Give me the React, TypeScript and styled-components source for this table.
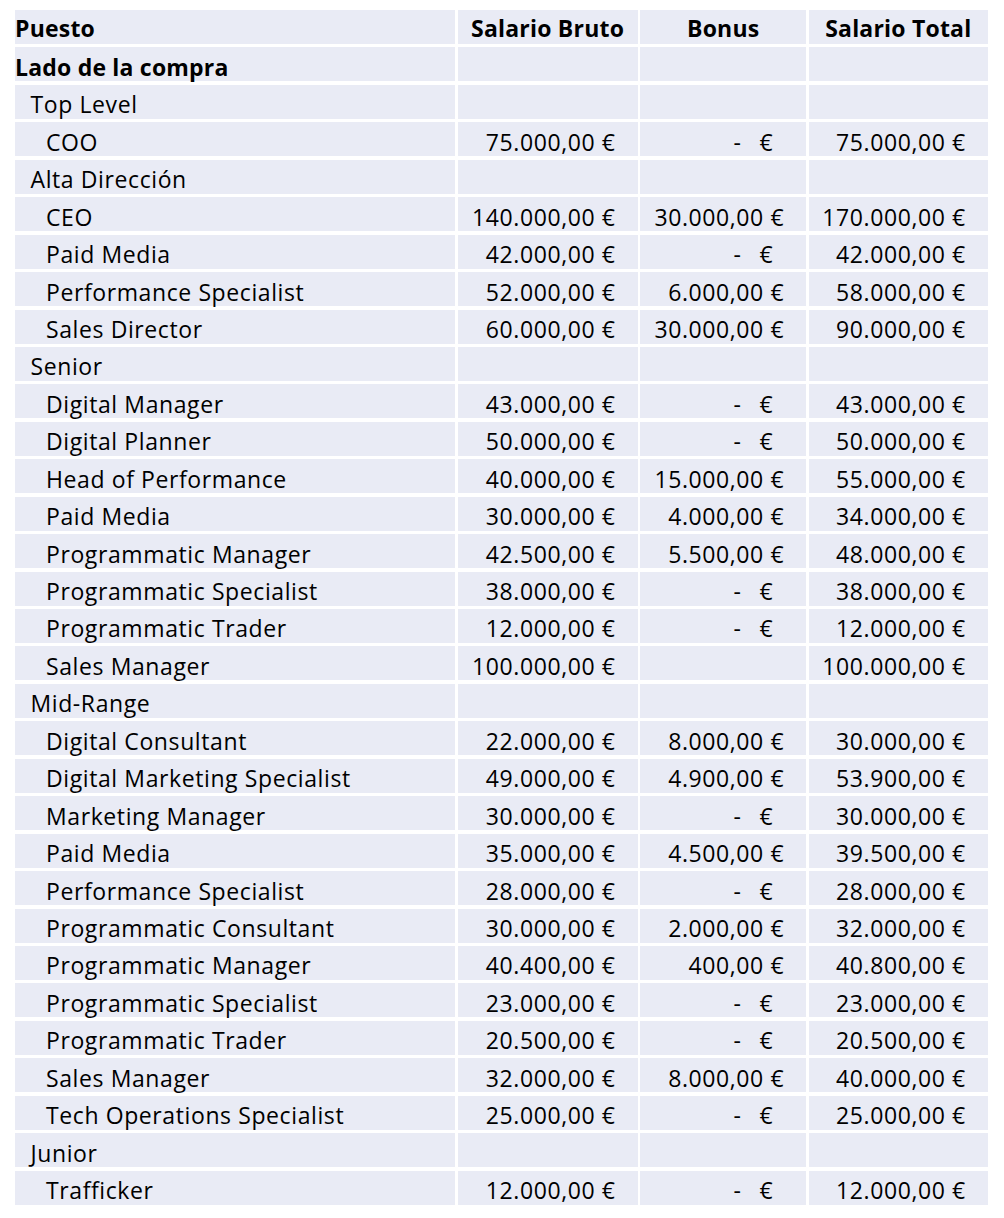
import React from 'react';
import styled, { createGlobalStyle } from 'styled-components';

type Row = {
  label: string;
  level: number;
  bold?: boolean;
  bruto?: number;
  bonus?: number | null;
};

const rows: Row[] = [
  { label: 'Lado de la compra', level: 0, bold: true },
  { label: 'Top Level', level: 1 },
  { label: 'COO', level: 2, bruto: 75000, bonus: 0 },
  { label: 'Alta Dirección', level: 1 },
  { label: 'CEO', level: 2, bruto: 140000, bonus: 30000 },
  { label: 'Paid Media', level: 2, bruto: 42000, bonus: 0 },
  { label: 'Performance Specialist', level: 2, bruto: 52000, bonus: 6000 },
  { label: 'Sales Director', level: 2, bruto: 60000, bonus: 30000 },
  { label: 'Senior', level: 1 },
  { label: 'Digital Manager', level: 2, bruto: 43000, bonus: 0 },
  { label: 'Digital Planner', level: 2, bruto: 50000, bonus: 0 },
  { label: 'Head of Performance', level: 2, bruto: 40000, bonus: 15000 },
  { label: 'Paid Media', level: 2, bruto: 30000, bonus: 4000 },
  { label: 'Programmatic Manager', level: 2, bruto: 42500, bonus: 5500 },
  { label: 'Programmatic Specialist', level: 2, bruto: 38000, bonus: 0 },
  { label: 'Programmatic Trader', level: 2, bruto: 12000, bonus: 0 },
  { label: 'Sales Manager', level: 2, bruto: 100000, bonus: null },
  { label: 'Mid-Range', level: 1 },
  { label: 'Digital Consultant', level: 2, bruto: 22000, bonus: 8000 },
  { label: 'Digital Marketing Specialist', level: 2, bruto: 49000, bonus: 4900 },
  { label: 'Marketing Manager', level: 2, bruto: 30000, bonus: 0 },
  { label: 'Paid Media', level: 2, bruto: 35000, bonus: 4500 },
  { label: 'Performance Specialist', level: 2, bruto: 28000, bonus: 0 },
  { label: 'Programmatic Consultant', level: 2, bruto: 30000, bonus: 2000 },
  { label: 'Programmatic Manager', level: 2, bruto: 40400, bonus: 400 },
  { label: 'Programmatic Specialist', level: 2, bruto: 23000, bonus: 0 },
  { label: 'Programmatic Trader', level: 2, bruto: 20500, bonus: 0 },
  { label: 'Sales Manager', level: 2, bruto: 32000, bonus: 8000 },
  { label: 'Tech Operations Specialist', level: 2, bruto: 25000, bonus: 0 },
  { label: 'Junior', level: 1 },
  { label: 'Trafficker', level: 2, bruto: 12000, bonus: 0 },
];

// es-ES style, but grouping 4-digit amounts too (like the spreadsheet)
const formatEuro = (value: number) => {
  const [int, dec] = value.toFixed(2).split('.');
  const grouped = int.replace(/\B(?=(\d{3})+(?!\d))/g, '.');
  return `${grouped},${dec} €`;
};

const Amount: React.FC<{ value?: number | null }> = ({ value }) => {
  if (value === undefined || value === null) return <NumberCell />;
  if (value === 0) {
    return (
      <NumberCell $zero>
        <Dash>-</Dash>€
      </NumberCell>
    );
  }
  return <NumberCell>{formatEuro(value)}</NumberCell>;
};

const App: React.FC = () => (
  <>
    <GlobalStyle />
    <Sheet>
      <HeaderCell $align="left">Puesto</HeaderCell>
      <HeaderCell>Salario Bruto</HeaderCell>
      <HeaderCell>Bonus</HeaderCell>
      <HeaderCell>Salario Total</HeaderCell>

      {rows.map((row, i) => {
        const hasValues = row.bruto !== undefined;
        return (
          <React.Fragment key={i}>
            <LabelCell $level={row.level} $bold={row.bold}>
              {row.label}
            </LabelCell>
            {hasValues ? (
              <>
                <Amount value={row.bruto} />
                <Amount value={row.bonus} />
                <Amount value={(row.bruto ?? 0) + (row.bonus ?? 0)} />
              </>
            ) : (
              <>
                <NumberCell />
                <NumberCell />
                <NumberCell />
              </>
            )}
          </React.Fragment>
        );
      })}
    </Sheet>
  </>
);

const GlobalStyle = createGlobalStyle`
  html, body {
    margin: 0;
    padding: 0;
    background: #ffffff;
  }
  body {
    font-family: "Open Sans", Lato, "Liberation Sans", sans-serif;
    color: #000000;
    font-variant-ligatures: none;
  }
`;

const Sheet = styled.div`
  display: grid;
  grid-template-columns: 440px 180px 166px 179px;
  grid-auto-rows: 34.05px;
  column-gap: 2.6px;
  row-gap: 3.4px;
  padding: 10px 0 0 15px;
  width: max-content;
`;

const Cell = styled.div`
  background: #e9ebf5;
  display: flex;
  align-items: flex-end;
  font-size: 23px;
  line-height: 1.2;
  letter-spacing: 0.6px;
  white-space: nowrap;
`;

const HeaderCell = styled(Cell)<{ $align?: 'left' | 'center' }>`
  font-weight: 700;
  letter-spacing: 0.2px;
  justify-content: ${({ $align }) => ($align === 'left' ? 'flex-start' : 'center')};
  padding-bottom: 1px;
`;

const LabelCell = styled(Cell)<{ $level: number; $bold?: boolean }>`
  font-weight: ${({ $bold }) => ($bold ? 700 : 400)};
  letter-spacing: ${({ $bold }) => ($bold ? '0.2px' : '0.6px')};
  padding-left: ${({ $level }) => $level * 15.5}px;
`;

const NumberCell = styled(Cell)<{ $zero?: boolean }>`
  justify-content: flex-end;
  padding-right: ${({ $zero }) => ($zero ? '33px' : '22px')};
`;

const Dash = styled.span`
  margin-right: 18px;
`;

export default App;
